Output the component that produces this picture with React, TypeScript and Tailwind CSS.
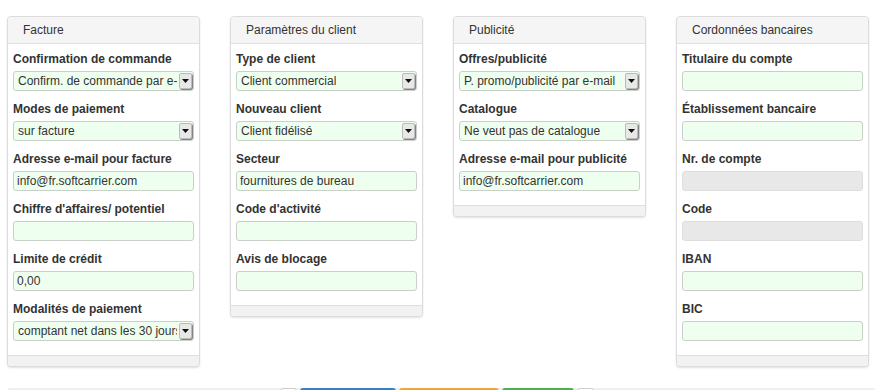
type Field = {
  label: string;
  kind: "select" | "input" | "disabled";
  value?: string;
};

type Panel = { title: string; fields: Field[] };

const PANELS: Panel[] = [
  {
    title: "Facture",
    fields: [
      { label: "Confirmation de commande", kind: "select", value: "Confirm. de commande par e-mail" },
      { label: "Modes de paiement", kind: "select", value: "sur facture" },
      { label: "Adresse e-mail pour facture", kind: "input", value: "info@fr.softcarrier.com" },
      { label: "Chiffre d'affaires/ potentiel", kind: "input" },
      { label: "Limite de crédit", kind: "input", value: "0,00" },
      { label: "Modalités de paiement", kind: "select", value: "comptant net dans les 30 jours" },
    ],
  },
  {
    title: "Paramètres du client",
    fields: [
      { label: "Type de client", kind: "select", value: "Client commercial" },
      { label: "Nouveau client", kind: "select", value: "Client fidélisé" },
      { label: "Secteur", kind: "input", value: "fournitures de bureau" },
      { label: "Code d'activité", kind: "input" },
      { label: "Avis de blocage", kind: "input" },
    ],
  },
  {
    title: "Publicité",
    fields: [
      { label: "Offres/publicité", kind: "select", value: "P. promo/publicité par e-mail" },
      { label: "Catalogue", kind: "select", value: "Ne veut pas de catalogue" },
      { label: "Adresse e-mail pour publicité", kind: "input", value: "info@fr.softcarrier.com" },
    ],
  },
  {
    title: "Cordonnées bancaires",
    fields: [
      { label: "Titulaire du compte", kind: "input" },
      { label: "Établissement bancaire", kind: "input" },
      { label: "Nr. de compte", kind: "disabled" },
      { label: "Code", kind: "disabled" },
      { label: "IBAN", kind: "input" },
      { label: "BIC", kind: "input" },
    ],
  },
];

function Control({ f }: { f: Field }) {
  if (f.kind === "select") {
    return (
      <div className="relative flex h-[20px] items-center overflow-hidden rounded-[3px] border border-[#c8d0c8] bg-[#efffef] pl-[4px] pr-[16px]">
        <span className="overflow-hidden whitespace-nowrap text-[12px] text-[#333]">{f.value}</span>
        <span className="absolute right-[1px] top-[1px] flex h-[16px] w-[13px] items-center justify-center rounded-[2px] border border-[#bbb] bg-[#e8e8e8] shadow-[1px_1px_1px_#777]">
          <svg width="7" height="4" viewBox="0 0 7 4">
            <path d="M0 0h7L3.5 4z" fill="#111" />
          </svg>
        </span>
      </div>
    );
  }
  const bg = f.kind === "disabled" ? "bg-[#e8e8e8] border-[#dedede]" : "bg-[#efffef] border-[#c8d0c8]";
  return (
    <div className={`flex h-[20px] items-center rounded-[3px] border pl-[3px] ${bg}`}>
      <span className="whitespace-nowrap text-[12px] text-[#333]">{f.value ?? ""}</span>
    </div>
  );
}

function Card({ p }: { p: Panel }) {
  return (
    <div className="w-[193px] rounded-[4px] border border-[#dcdcdc] bg-white shadow-[0_1px_2px_rgba(0,0,0,0.12)]">
      <div className="flex h-[27px] items-center rounded-t-[4px] border-b border-[#e0e0e0] bg-[#f5f5f5] pl-[15px] text-[12px] text-[#333]">
        {p.title}
      </div>
      <div className="flex flex-col gap-[10px] px-[5px] pb-[14px] pt-[7px]">
        {p.fields.map((f) => (
          <div key={f.label} className="flex flex-col gap-[4px]">
            <div className="h-[16px] text-[12px] font-bold leading-[16px] text-[#333]">{f.label}</div>
            <Control f={f} />
          </div>
        ))}
      </div>
      <div className="h-[11px] rounded-b-[4px] border-t border-[#dedede] bg-[#f2f2f2]" />
    </div>
  );
}

export default function App() {
  return (
    <div className="h-[390px] overflow-hidden bg-white font-['Liberation_Sans',Arial,sans-serif]">
      <div className="flex items-start gap-[30px] pl-[7px] pt-[16px]">
        {PANELS.map((p) => (
          <Card key={p.title} p={p} />
        ))}
      </div>
      <div className="mx-[7px] mt-[21px] flex h-[30px] justify-center gap-[3px] rounded-[3px] bg-[#f0f0f0]">
        <div className="ml-[-10px] h-[20px] w-[17px] rounded-[3px] border border-[#ccc] bg-white" />
        <div className="h-[20px] w-[96px] rounded-[3px] bg-[#3a7fc1]" />
        <div className="h-[20px] w-[100px] rounded-[3px] bg-[#f0a640]" />
        <div className="h-[20px] w-[72px] rounded-[3px] bg-[#4db04d]" />
        <div className="h-[20px] w-[17px] rounded-[3px] border border-[#ccc] bg-white" />
      </div>
    </div>
  );
}
